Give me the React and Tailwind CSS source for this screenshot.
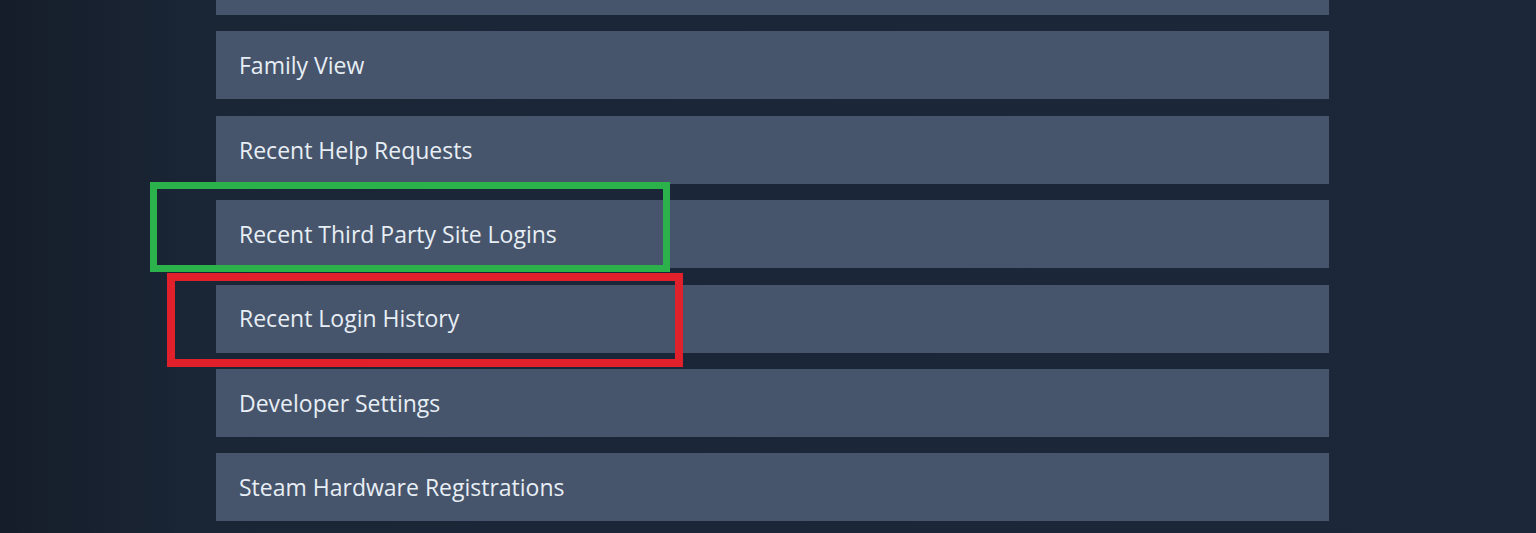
import React from "react";

const items = [
  "Family View",
  "Recent Help Requests",
  "Recent Third Party Site Logins",
  "Recent Login History",
  "Developer Settings",
  "Steam Hardware Registrations",
];

export default function App() {
  return (
    <div
      className="relative w-[1536px] h-[533px] overflow-hidden bg-[linear-gradient(90deg,#151d29_0%,#1a2535_12%,#1b2739_50%,#1c283a_100%)]"
      style={{ fontFamily: '"Open Sans", "Noto Sans", sans-serif' }}
    >
      <div className="ml-[216px] w-[1113px] -mt-[53px] flex flex-col gap-[16.4px]">
        <div className="h-[68px] bg-[#46556b]" />
        {items.map((t) => (
          <div
            key={t}
            className="h-[68px] bg-[#46556b] flex items-center pl-[23px] text-[23px] text-[#e8eef5]"
          >
            {t}
          </div>
        ))}
      </div>
      <div className="absolute left-[150px] top-[182px] w-[520px] h-[90px] border-[7px] border-[#2cb24a]" />
      <div className="absolute left-[167px] top-[273px] w-[516px] h-[94px] border-[8px] border-[#e0212b]" />
    </div>
  );
}
